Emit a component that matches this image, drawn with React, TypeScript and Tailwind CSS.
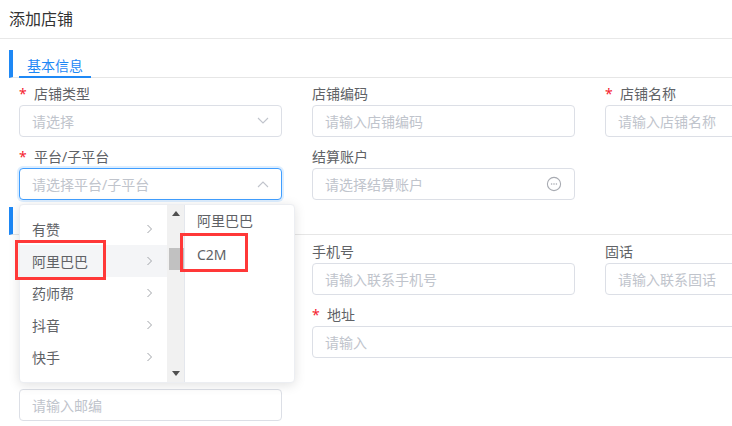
import React from "react";

const FONT = { fontFamily: '"Noto Sans", "Noto Sans CJK SC", sans-serif' };

function Chevron({ up = false }: { up?: boolean }) {
  return (
    <svg width="12" height="8" viewBox="0 0 12 8" className="shrink-0">
      <path
        d={up ? "M1 7 L6 2 L11 7" : "M1 1 L6 6 L11 1"}
        fill="none"
        stroke="#c0c4cc"
        strokeWidth="1.1"
      />
    </svg>
  );
}

function MoreIcon() {
  return (
    <svg width="16" height="16" viewBox="0 0 16 16" className="shrink-0">
      <circle cx="8" cy="8" r="6.6" fill="none" stroke="#a8abb2" strokeWidth="1.1" />
      <circle cx="5.6" cy="8" r="0.8" fill="#a8abb2" />
      <circle cx="8" cy="8" r="0.8" fill="#a8abb2" />
      <circle cx="10.4" cy="8" r="0.8" fill="#a8abb2" />
    </svg>
  );
}

function Field({
  label,
  required = false,
  placeholder,
  icon,
  focused = false,
  span2 = false,
}: {
  label: string;
  required?: boolean;
  placeholder: string;
  icon?: React.ReactNode;
  focused?: boolean;
  span2?: boolean;
}) {
  return (
    <div className={span2 ? "col-span-2 flex flex-col" : "flex flex-col"}>
      <div className="h-[23px] flex items-center text-[14px] text-[#606266]">
        {required && <span className="text-[#f5222d] w-[15px] text-[14px] leading-none">*</span>}
        <span>{label}</span>
      </div>
      <div
        className={
          focused
            ? "h-[32px] rounded-[4px] border border-[#409eff] shadow-[0_0_0_2px_rgba(64,158,255,0.18)] flex items-center justify-between pl-[12px] pr-[12px] bg-white"
            : "h-[32px] rounded-[4px] border border-[#dcdfe6] flex items-center justify-between pl-[12px] pr-[12px] bg-white"
        }
      >
        <span className="text-[14px] text-[#c0c4cc] whitespace-nowrap">{placeholder}</span>
        {icon}
      </div>
    </div>
  );
}

function SectionHeader({ title }: { title: string }) {
  return (
    <div className="ml-[9px] h-[28px] border-l-[4px] border-[#1e88f5] flex border-b border-b-[#e6e6e6]">
      <div className="ml-[6px] px-[8px] pt-[4px] h-[28px] flex items-center border-b-2 border-[#1e88f5] text-[14px] text-[#1e88f5]">
        {title}
      </div>
    </div>
  );
}

function ArrowRight() {
  return (
    <svg width="7" height="10" viewBox="0 0 7 10" className="shrink-0">
      <path d="M1.5 1 L5.5 5 L1.5 9" fill="none" stroke="#a0a3a8" strokeWidth="1" />
    </svg>
  );
}

export default function App() {
  const level1 = ["有赞", "阿里巴巴", "药师帮", "抖音", "快手", "京东"];
  return (
    <div className="w-[732px] h-[426px] overflow-hidden relative bg-white" style={FONT}>
      <div className="h-[39px] border-b border-[#e8e8e8] flex items-center pl-[9px] text-[16px] text-[#333]">
        添加店铺
      </div>

      <div className="mt-[11px] w-[1000px]">
        <SectionHeader title="基本信息" />
        <div className="mt-[4px] pl-[19px] grid grid-cols-[263px_263px_263px] gap-x-[30px] gap-y-[8px]">
          <Field label="店铺类型" required placeholder="请选择" icon={<Chevron />} />
          <Field label="店铺编码" placeholder="请输入店铺编码" />
          <Field label="店铺名称" required placeholder="请输入店铺名称" />
          <Field label="平台/子平台" required placeholder="请选择平台/子平台" icon={<Chevron up />} focused />
          <Field label="结算账户" placeholder="请选择结算账户" icon={<MoreIcon />} />
          <div />
        </div>

        <div className="mt-[7px]">
          <SectionHeader title="联系信息" />
        </div>
        <div className="mt-[5px] pl-[19px] grid grid-cols-[263px_263px_263px] gap-x-[30px] gap-y-[8px]">
          <Field label="联系人" placeholder="请输入联系人" />
          <Field label="手机号" placeholder="请输入联系手机号" />
          <Field label="固话" placeholder="请输入联系固话" />
          <Field label="邮箱" placeholder="请输入邮箱" />
          <Field label="地址" required placeholder="请输入" span2 />
          <Field label="" placeholder="请输入邮编" />
        </div>
      </div>

      {/* cascader dropdown */}
      <div className="absolute left-[19px] top-[204px] w-[276px] h-[179px] bg-white rounded-[4px] border border-[#eceef2] shadow-[0_2px_12px_rgba(0,0,0,0.12)] flex overflow-hidden">
        <div className="w-[147px] h-full overflow-hidden">
          <div className="pt-[8px]">
            {level1.map((t, i) => (
              <div
                key={t}
                className={
                  i === 1
                    ? "h-[32px] flex items-center justify-between pl-[12px] pr-[14px] bg-[#f4f5f7] text-[14px] text-[#606266]"
                    : "h-[32px] flex items-center justify-between pl-[12px] pr-[14px] text-[14px] text-[#606266]"
                }
              >
                <span>{t}</span>
                <ArrowRight />
              </div>
            ))}
          </div>
        </div>
        <div className="w-[17px] h-full bg-[#f1f1f1] relative flex flex-col items-center justify-between py-[6px]">
          <svg width="8" height="5" viewBox="0 0 8 5">
            <path d="M0 5 L4 0 L8 5 Z" fill="#505050" />
          </svg>
          <svg width="8" height="5" viewBox="0 0 8 5">
            <path d="M0 0 L4 5 L8 0 Z" fill="#505050" />
          </svg>
          <div className="absolute left-[2px] right-[0px] top-[43px] h-[22px] bg-[#c1c1c1]" />
        </div>
        <div className="flex-1 border-l border-[#e4e7ed] h-full overflow-hidden">
          <div className="-mt-[2px]">
            <div className="h-[34px] flex items-center pl-[12px] text-[14px] text-[#606266]">阿里巴巴</div>
            <div className="h-[34px] flex items-center pl-[12px] text-[14px] text-[#606266]">C2M</div>
          </div>
        </div>
      </div>

      {/* annotation boxes */}
      <div className="absolute left-[15px] top-[240px] w-[91px] h-[40px] border-[3px] border-[#ff3838]" />
      <div className="absolute left-[180px] top-[233px] w-[68px] h-[39px] border-[3px] border-[#ff3838]" />
    </div>
  );
}
